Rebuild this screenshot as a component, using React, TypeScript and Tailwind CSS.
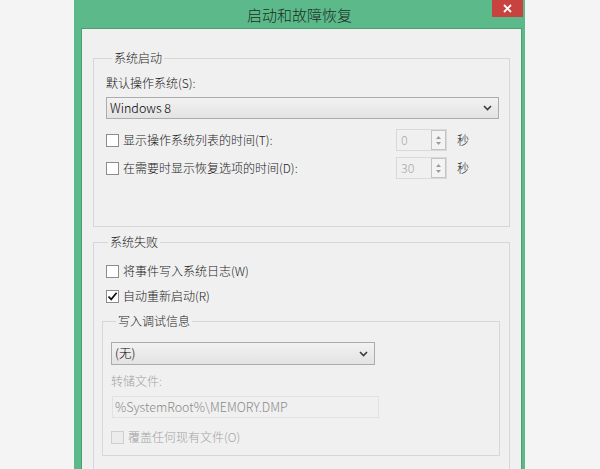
import React from "react";

const font = "font-['Noto_Sans_CJK_SC','Noto_Sans',sans-serif] font-light";

function Checkbox({ checked = false, disabled = false }: { checked?: boolean; disabled?: boolean }) {
  return (
    <span
      className={
        "flex h-[13px] w-[13px] shrink-0 items-center justify-center border " +
        (disabled ? "border-[#cfcfcf] bg-[#ececec]" : "border-[#8c8c8c] bg-white")
      }
    >
      {checked && (
        <svg width="11" height="11" viewBox="0 0 11 11">
          <path d="M1.5 5.5 L4.2 8.4 L9.6 1.8" fill="none" stroke="#111" strokeWidth="1.7" />
        </svg>
      )}
    </span>
  );
}

function CheckRow({
  label,
  checked,
  disabled,
  className = "",
}: {
  label: string;
  checked?: boolean;
  disabled?: boolean;
  className?: string;
}) {
  return (
    <div className={"flex h-[16px] items-center gap-[4px] " + className}>
      <Checkbox checked={checked} disabled={disabled} />
      <span className={"text-[12px] leading-[16px] " + (disabled ? "text-[#a3a3a3]" : "text-[#1a1a1a]")}>
        {label}
      </span>
    </div>
  );
}

function Chevron() {
  return (
    <svg width="9" height="6" viewBox="0 0 9 6" className="shrink-0">
      <path d="M1 1 L4.5 4.5 L8 1" fill="none" stroke="#3c3c3c" strokeWidth="1.6" />
    </svg>
  );
}

function Select({ value, className = "" }: { value: string; className?: string }) {
  return (
    <div
      className={
        "flex items-center justify-between border border-[#acacac] bg-gradient-to-b from-[#f2f2f2] to-[#e3e3e3] pl-[3px] pr-[6px] " +
        className
      }
    >
      <span className="text-[12.5px] leading-none text-black">{value}</span>
      <Chevron />
    </div>
  );
}

function Spinner({ value }: { value: string }) {
  return (
    <div className="flex h-[22px] w-[51px] border border-[#d9d9d9] bg-[#f0f0f0]">
      <span className="flex-1 pl-[4px] text-[12.5px] leading-[20px] text-[#a8a8a8]">{value}</span>
      <div className="flex w-[15px] flex-col items-center justify-center gap-[3px] border border-[#c4c4c4] bg-[#f3f3f3]">
        <svg width="5" height="3" viewBox="0 0 5 3">
          <path d="M0 3 L2.5 0 L5 3 Z" fill="#9a9a9a" />
        </svg>
        <svg width="5" height="3" viewBox="0 0 5 3">
          <path d="M0 0 L2.5 3 L5 0 Z" fill="#9a9a9a" />
        </svg>
      </div>
    </div>
  );
}

function TimeRow({ label, value, className = "" }: { label: string; value: string; className?: string }) {
  return (
    <div className={"flex h-[22px] items-center " + className}>
      <div className="flex flex-1 items-center gap-[4px]">
        <Checkbox />
        <span className="text-[12px] leading-[16px] text-[#1a1a1a]">{label}</span>
      </div>
      <Spinner value={value} />
      <span className="ml-[10px] mr-[30px] text-[12px] leading-[16px] text-[#1a1a1a]">秒</span>
    </div>
  );
}

export default function App() {
  return (
    <div className={"h-[469px] w-[600px] overflow-hidden bg-[#f5f4f4] pl-[74px] " + font}>
      <div className="flex h-[520px] w-[451px] flex-col bg-[#5bb98a]">
        {/* title bar */}
        <div className="relative flex h-[28px] shrink-0 items-center justify-center">
          <span className="text-[15px] leading-none text-[#1c2e24]">启动和故障恢复</span>
          <div className="absolute right-[2px] top-0 flex h-[17px] w-[31px] items-center justify-center bg-[#c8433f]">
            <svg width="9" height="9" viewBox="0 0 9 9">
              <path d="M1 1 L8 8 M8 1 L1 8" stroke="#fff" strokeWidth="1.8" />
            </svg>
          </div>
        </div>

        {/* client area */}
        <div className="ml-[7px] mr-[3px] flex-1 border-l border-t border-r border-[#4d9f73] bg-[#f0f0f0] px-[11px] pt-[21px]">
          <fieldset className="border border-[#d7d7d7] pb-[47px] pl-[12px] pr-[10px]">
            <legend className="ml-[6px] px-[2px] text-[12px] leading-[16px] text-[#1a1a1a]">系统启动</legend>
            <div className="mt-[9px] text-[12px] leading-[16px] text-[#1a1a1a]">默认操作系统(S):</div>
            <Select value="Windows 8" className="mt-[6px] h-[22px]" />
            <TimeRow className="mt-[10px]" label="显示操作系统列表的时间(T):" value="0" />
            <TimeRow className="mt-[6px]" label="在需要时显示恢复选项的时间(D):" value="30" />
          </fieldset>

          <fieldset className="mt-[7px] border border-[#d7d7d7] pb-[20px] pl-[8px] pr-[9px]">
            <legend className="ml-[6px] px-[2px] text-[12px] leading-[16px] text-[#1a1a1a]">系统失败</legend>
            <CheckRow className="mt-[13px] pl-[4px]" label="将事件写入系统日志(W)" />
            <CheckRow className="mt-[9px] pl-[4px]" label="自动重新启动(R)" checked />

            <fieldset className="mt-[9px] border border-[#d7d7d7] pb-[10px] pl-[8px]">
              <legend className="ml-[5px] px-[2px] text-[12px] leading-[16px] text-[#1a1a1a]">写入调试信息</legend>
              <Select value="(无)" className="mt-[13px] h-[23px] w-[264px]" />
              <div className="mt-[8px] text-[12px] leading-[16px] text-[#a3a3a3]">转储文件:</div>
              <div className="ml-[1px] mt-[7px] flex h-[22px] w-[267px] items-center border border-[#e2e2e2] bg-[#f0f0f0] pl-[2px]">
                <span className="text-[12.5px] leading-none text-[#8a8a8a]">%SystemRoot%\MEMORY.DMP</span>
              </div>
              <CheckRow className="mt-[11px]" label="覆盖任何现有文件(O)" disabled />
            </fieldset>
          </fieldset>
        </div>
      </div>
    </div>
  );
}
